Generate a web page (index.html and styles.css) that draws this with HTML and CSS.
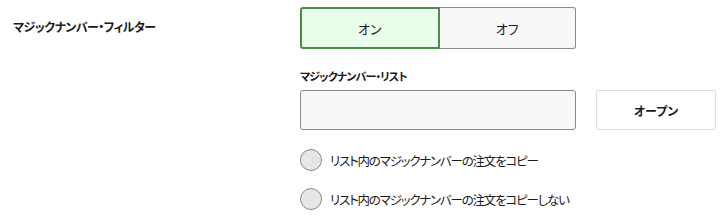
FILE: index.html
```html
<!DOCTYPE html>
<html lang="ja">
<head>
    <meta charset="UTF-8">
    <title>マジックナンバー・フィルター</title>
    <link rel="stylesheet" href="styles.css">
</head>
<body>
    <div class="settings">
        <div class="setting-label">マジックナンバー・フィルター</div>

        <div class="setting-body">
            <div class="toggle">
                <button class="toggle-option active">オン</button>
                <button class="toggle-option">オフ</button>
            </div>

            <label class="field-label" for="magic-list">マジックナンバー・リスト</label>
            <div class="field-row">
                <input type="text" id="magic-list" class="text-field">
                <button class="open-button">オープン</button>
            </div>

            <div class="radio-group">
                <label class="radio-row">
                    <span class="radio"></span>
                    <span>リスト内のマジックナンバーの注文をコピー</span>
                </label>
                <label class="radio-row">
                    <span class="radio"></span>
                    <span>リスト内のマジックナンバーの注文をコピーしない</span>
                </label>
            </div>
        </div>
    </div>
</body>
</html>
```

FILE: styles.css
```css
:root {
    --text-color: #1a1a1a;
    --green: #4a8c4a;
    --green-bg: #eafdea;
    --field-bg: #f8f8f8;
    --border-dark: #8a8a8a;
    --border-light: #dcdcdc;
}

body {
    margin: 0;
    background: #fff;
    color: var(--text-color);
    font-family: "Noto Sans CJK JP", "Noto Sans", sans-serif;
    font-feature-settings: "palt";
}

.settings {
    display: flex;
}

.setting-label {
    width: 287px;
    padding-left: 13px;
    padding-top: 17px;
    font-size: 12px;
    font-weight: 700;
    line-height: 20px;
    letter-spacing: -0.5px;
}

.setting-body {
    display: flex;
    flex-direction: column;
    padding-top: 7px;
}

.toggle {
    display: flex;
    width: 276px;
    height: 42px;
}

.toggle-option {
    flex: 1;
    margin: 0;
    font-family: inherit;
    font-feature-settings: "palt";
    font-size: 13px;
    color: var(--text-color);
    background: var(--field-bg);
    border: 1px solid var(--border-dark);
    border-left: none;
    border-radius: 0 3px 3px 0;
    padding: 0;
}

.toggle-option.active {
    background: var(--green-bg);
    border: 2px solid var(--green);
    border-radius: 3px 0 0 3px;
}

.field-label {
    margin-top: 18px;
    font-size: 11px;
    font-weight: 700;
    line-height: 18px;
    letter-spacing: -0.8px;
}

.field-row {
    display: flex;
    margin-top: 5px;
}

.text-field {
    box-sizing: border-box;
    width: 276px;
    height: 40px;
    margin: 0;
    background: var(--field-bg);
    border: 1px solid var(--border-dark);
    border-radius: 3px;
}

.open-button {
    box-sizing: border-box;
    width: 120px;
    height: 40px;
    margin-left: 20px;
    font-family: inherit;
    font-feature-settings: "palt";
    font-size: 12px;
    font-weight: 700;
    color: var(--text-color);
    background: #fff;
    border: 1px solid var(--border-light);
    border-radius: 2px;
}

.radio-group {
    display: flex;
    flex-direction: column;
    gap: 9px;
    margin-top: 15px;
}

.radio-row {
    display: flex;
    align-items: center;
    height: 30px;
    font-size: 12.5px;
    letter-spacing: -1.2px;
}

.radio {
    box-sizing: border-box;
    width: 22px;
    height: 22px;
    margin-right: 8px;
    border: 1px solid var(--border-dark);
    border-radius: 50%;
    background: #e6e6e6;
}
```
